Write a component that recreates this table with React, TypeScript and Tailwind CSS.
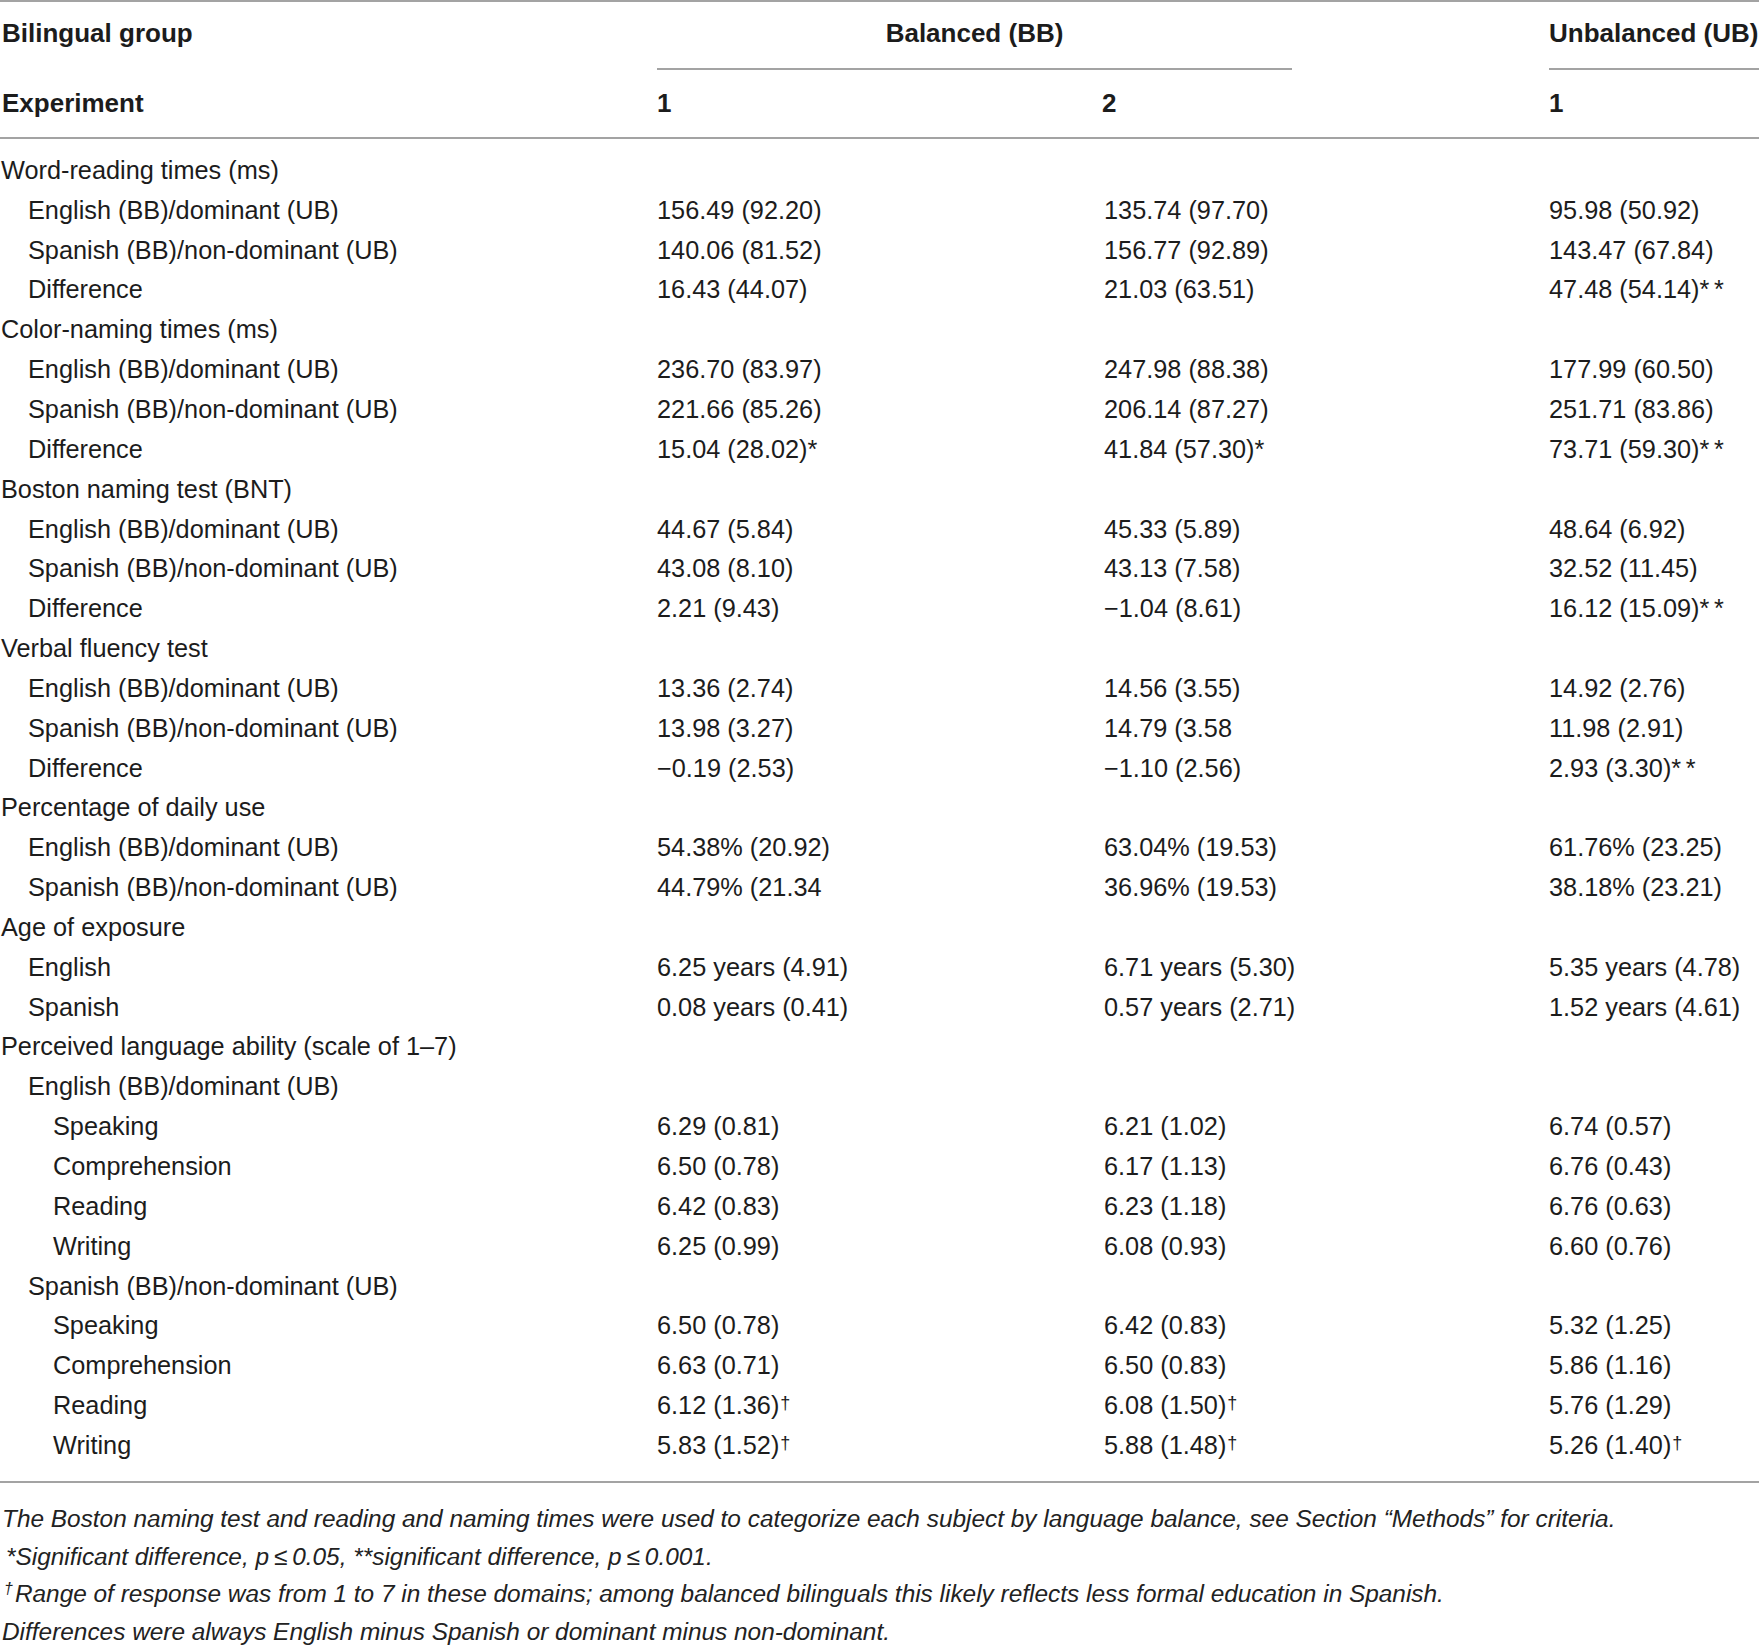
type Row = {
  label: string;
  indent: 0 | 1 | 2;
  vals?: string[];
};

const EN = 'English (BB)/dominant (UB)';
const ES = 'Spanish (BB)/non-dominant (UB)';

const rows: Row[] = [
  { label: 'Word-reading times (ms)', indent: 0 },
  { label: EN, indent: 1, vals: ['156.49 (92.20)', '135.74 (97.70)', '95.98 (50.92)'] },
  { label: ES, indent: 1, vals: ['140.06 (81.52)', '156.77 (92.89)', '143.47 (67.84)'] },
  { label: 'Difference', indent: 1, vals: ['16.43 (44.07)', '21.03 (63.51)', '47.48 (54.14)**'] },
  { label: 'Color-naming times (ms)', indent: 0 },
  { label: EN, indent: 1, vals: ['236.70 (83.97)', '247.98 (88.38)', '177.99 (60.50)'] },
  { label: ES, indent: 1, vals: ['221.66 (85.26)', '206.14 (87.27)', '251.71 (83.86)'] },
  { label: 'Difference', indent: 1, vals: ['15.04 (28.02)*', '41.84 (57.30)*', '73.71 (59.30)**'] },
  { label: 'Boston naming test (BNT)', indent: 0 },
  { label: EN, indent: 1, vals: ['44.67 (5.84)', '45.33 (5.89)', '48.64 (6.92)'] },
  { label: ES, indent: 1, vals: ['43.08 (8.10)', '43.13 (7.58)', '32.52 (11.45)'] },
  { label: 'Difference', indent: 1, vals: ['2.21 (9.43)', '\u22121.04 (8.61)', '16.12 (15.09)**'] },
  { label: 'Verbal fluency test', indent: 0 },
  { label: EN, indent: 1, vals: ['13.36 (2.74)', '14.56 (3.55)', '14.92 (2.76)'] },
  { label: ES, indent: 1, vals: ['13.98 (3.27)', '14.79 (3.58', '11.98 (2.91)'] },
  { label: 'Difference', indent: 1, vals: ['\u22120.19 (2.53)', '\u22121.10 (2.56)', '2.93 (3.30)**'] },
  { label: 'Percentage of daily use', indent: 0 },
  { label: EN, indent: 1, vals: ['54.38% (20.92)', '63.04% (19.53)', '61.76% (23.25)'] },
  { label: ES, indent: 1, vals: ['44.79% (21.34', '36.96% (19.53)', '38.18% (23.21)'] },
  { label: 'Age of exposure', indent: 0 },
  { label: 'English', indent: 1, vals: ['6.25 years (4.91)', '6.71 years (5.30)', '5.35 years (4.78)'] },
  { label: 'Spanish', indent: 1, vals: ['0.08 years (0.41)', '0.57 years (2.71)', '1.52 years (4.61)'] },
  { label: 'Perceived language ability (scale of 1\u20137)', indent: 0 },
  { label: EN, indent: 1 },
  { label: 'Speaking', indent: 2, vals: ['6.29 (0.81)', '6.21 (1.02)', '6.74 (0.57)'] },
  { label: 'Comprehension', indent: 2, vals: ['6.50 (0.78)', '6.17 (1.13)', '6.76 (0.43)'] },
  { label: 'Reading', indent: 2, vals: ['6.42 (0.83)', '6.23 (1.18)', '6.76 (0.63)'] },
  { label: 'Writing', indent: 2, vals: ['6.25 (0.99)', '6.08 (0.93)', '6.60 (0.76)'] },
  { label: ES, indent: 1 },
  { label: 'Speaking', indent: 2, vals: ['6.50 (0.78)', '6.42 (0.83)', '5.32 (1.25)'] },
  { label: 'Comprehension', indent: 2, vals: ['6.63 (0.71)', '6.50 (0.83)', '5.86 (1.16)'] },
  { label: 'Reading', indent: 2, vals: ['6.12 (1.36)\u2020', '6.08 (1.50)\u2020', '5.76 (1.29)'] },
  { label: 'Writing', indent: 2, vals: ['5.83 (1.52)\u2020', '5.88 (1.48)\u2020', '5.26 (1.40)\u2020'] },
];

const indentClass = ['pl-[1px]', 'pl-[28px]', 'pl-[53px]'];

// asterisks and daggers get their own styling
function Value({ text }: { text: string }) {
  const m = text.match(/^(.*?)(\*+|\u2020)?$/);
  const base = m ? m[1] : text;
  const mark = m ? m[2] : undefined;
  return (
    <span>
      {base}
      {mark === '\u2020' && <sup className="text-[18px] relative -top-[5px] ml-[1px]">{'\u2020'}</sup>}
      {mark && mark !== '\u2020' && <span className="tracking-[0.18em]">{mark}</span>}
    </span>
  );
}

export default function App() {
  return (
    <div
      className="w-[1759px] bg-white text-[#1c1c1c]"
      style={{ fontFamily: '"Liberation Sans", Arial, sans-serif' }}
    >
      {/* Header */}
      <div className="border-t-2 border-[#a3a3a3]">
        <div className="flex h-[68px] text-[26px] font-bold">
          <div className="w-[657px] pl-[2px] pt-[12px]">Bilingual group</div>
          <div className="w-[635px] border-b-2 border-[#a3a3a3] pt-[12px] text-center">Balanced (BB)</div>
          <div className="w-[257px]" />
          <div className="flex-1 border-b-2 border-[#a3a3a3] pt-[12px] whitespace-nowrap">Unbalanced (UB)</div>
        </div>
        <div className="flex h-[69px] items-center border-b-2 border-[#a3a3a3] text-[26px] font-bold">
          <div className="w-[657px] pl-[2px]">Experiment</div>
          <div className="w-[445px]">1</div>
          <div className="w-[447px]">2</div>
          <div className="flex-1">1</div>
        </div>
      </div>

      {/* Body */}
      <div className="border-b-2 border-[#a3a3a3] pt-[11px] pb-[16px] text-[25.3px] leading-[40px]">
        {rows.map((r, i) => (
          <div key={i} className="flex h-[39.85px] items-center whitespace-nowrap">
            <div className={`w-[657px] ${indentClass[r.indent]}`}>{r.label}</div>
            {r.vals && (
              <>
                <div className="w-[447px]"><Value text={r.vals[0]} /></div>
                <div className="w-[445px]"><Value text={r.vals[1]} /></div>
                <div className="flex-1"><Value text={r.vals[2]} /></div>
              </>
            )}
          </div>
        ))}
      </div>

      {/* Footnotes */}
      <div className="pt-[17px] text-[24.4px] italic leading-[37.8px] text-[#222]">
        <p className="pl-[2px] whitespace-nowrap">
          The Boston naming test and reading and naming times were used to categorize each subject by language balance, see Section {'\u201C'}Methods{'\u201D'} for criteria.
        </p>
        <p className="pl-[6px]">
          *Significant difference, p{'\u2009\u2264\u2009'}0.05, **significant difference, p{'\u2009\u2264\u2009'}0.001.
        </p>
        <p className="pl-[4px]">
          <sup className="text-[16px] mr-[2px]">{'\u2020'}</sup>Range of response was from 1 to 7 in these domains; among balanced bilinguals this likely reflects less formal education in Spanish.
        </p>
        <p className="pl-[2px]">Differences were always English minus Spanish or dominant minus non-dominant.</p>
      </div>
    </div>
  );
}
